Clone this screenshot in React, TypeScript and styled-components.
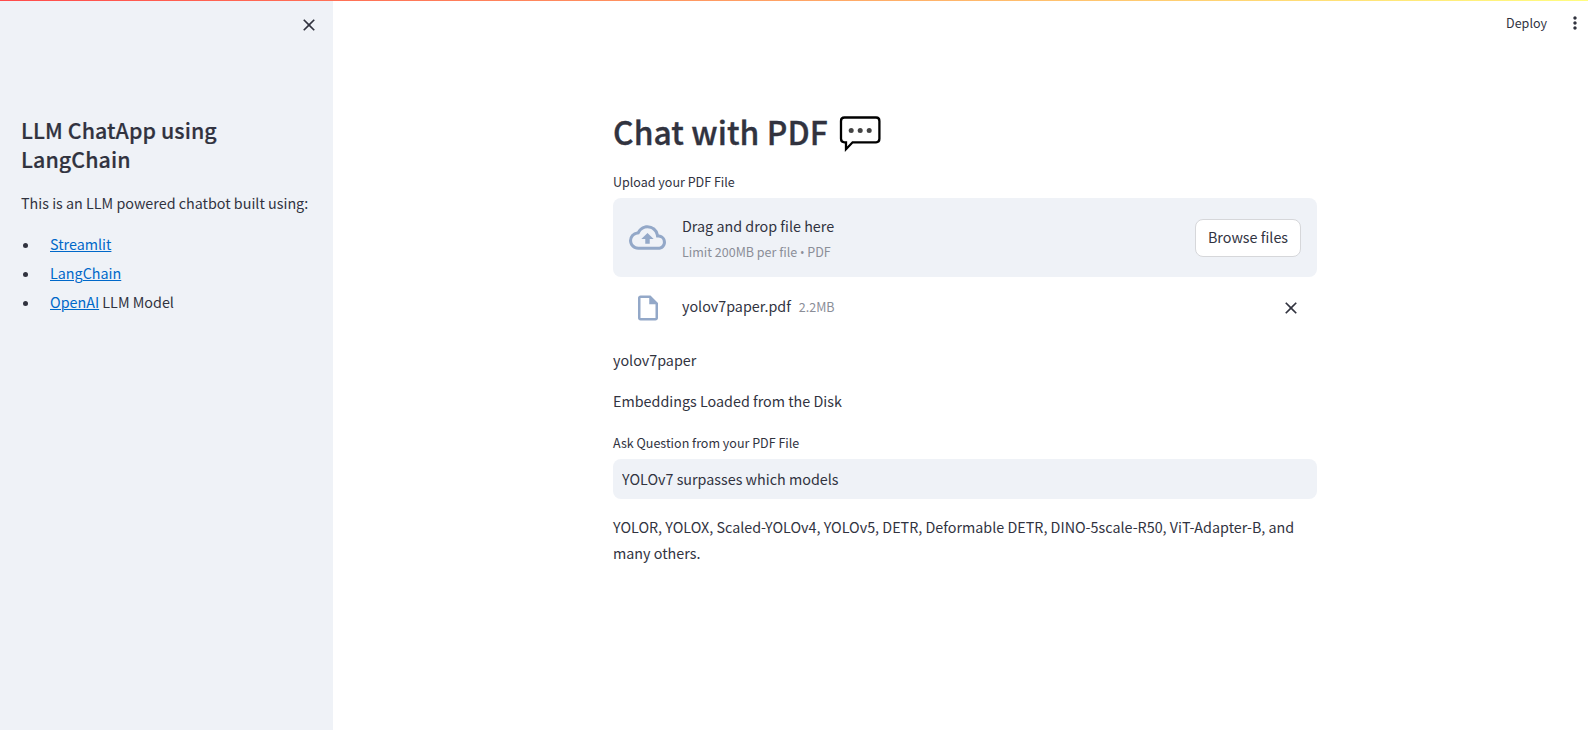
import React from 'react';
import styled, { createGlobalStyle } from 'styled-components';
import { MdClose, MdMoreVert, MdOutlineCloudUpload, MdOutlineInsertDriveFile } from 'react-icons/md';

const ink = '#31333f';
const panel = '#eff2f7';

const GlobalStyle = createGlobalStyle`
  *, *::before, *::after { box-sizing: border-box; }
  body {
    margin: 0;
    background: #fff;
    color: ${ink};
    font-family: "Noto Sans CJK SC", sans-serif;
    font-size: 14.33px;
    line-height: 25.6px;
    overflow: hidden;
  }
`;

const Page = styled.div`
  display: flex;
  flex-direction: column;
  height: 730px;
`;

const Decoration = styled.div`
  flex: none;
  height: 1px;
  background: linear-gradient(90deg, #ff4b4b, #fffd80);
`;

const Body = styled.div`
  display: flex;
  flex: 1;
`;

const Sidebar = styled.aside`
  width: 333px;
  padding: 14px 14px 0 21px;
  background: ${panel};
`;

const SidebarTop = styled.div`
  display: flex;
  justify-content: flex-end;
  height: 100px;
`;

const IconButton = styled.button`
  display: flex;
  width: 20px;
  height: 20px;
  padding: 0;
  border: 0;
  background: none;
  color: ${ink};
  cursor: pointer;
`;

const SidebarTitle = styled.h2`
  margin: 0;
  font-size: 21.4px;
  font-weight: 500;
  line-height: 29px;
  letter-spacing: 0.08px;
  -webkit-text-stroke: 0.2px ${ink};
`;

const Intro = styled.p`
  margin: 17px 0 14px;
  white-space: nowrap;
`;

const LinkList = styled.ul`
  margin: 0;
  padding: 0;
  list-style: none;
`;

const LinkItem = styled.li`
  display: flex;
  align-items: center;
  height: 29px;
  white-space: pre;

  &::before {
    content: '';
    width: 5px;
    height: 5px;
    margin: 2px 22px 0 2px;
    border-radius: 50%;
    background: ${ink};
  }
`;

const Link = styled.a`
  color: #0068c9;
  text-decoration: underline;
  text-underline-offset: 1px;
  text-decoration-thickness: 1px;
`;

const Main = styled.main`
  flex: 1;
`;

const Toolbar = styled.header`
  display: flex;
  align-items: center;
  justify-content: flex-end;
  gap: 18px;
  height: 44px;
  padding-right: 3px;
`;

const Deploy = styled.button`
  height: 26px;
  margin-bottom: 1px;
  padding: 0;
  border: 0;
  background: none;
  color: ${ink};
  font: inherit;
  font-size: 12.53px;
`;

const Content = styled.div`
  width: 704px;
  margin: 65px 0 0 280px;
`;

const Title = styled.h1`
  display: flex;
  align-items: center;
  gap: 11px;
  margin: 0 0 18px;
  height: 43px;
  font-size: 31.8px;
  font-weight: 500;
  line-height: 43px;
  letter-spacing: 0.09px;
  -webkit-text-stroke: 0.35px ${ink};
`;

const Label = styled.label`
  display: block;
  height: 22px;
  font-size: 12.53px;
  line-height: 22px;
`;

const Dropzone = styled.section`
  display: flex;
  align-items: center;
  height: 79px;
  margin-top: 5px;
  padding: 0 16px;
  border-radius: 8px;
  background: ${panel};
`;

const IconSlot = styled.span`
  display: flex;
  justify-content: center;
  width: 37px;
  margin-right: 16px;
  color: #93a8c8;
`;

const DropText = styled.div`
  display: flex;
  flex: 1;
  flex-direction: column;
  padding-top: 3px;
`;

const Hint = styled.small`
  color: #8b8e98;
  font-size: 12.53px;
`;

const Dot = styled.span`
  font-family: "Open Sans", sans-serif;
  font-size: 12px;
`;

const BrowseButton = styled.button`
  width: 106px;
  height: 38px;
  padding: 0 0 2px;
  border: 1px solid #d6d7da;
  border-radius: 8px;
  background: #fff;
  color: ${ink};
  font: inherit;
`;

const FileRow = styled.div`
  display: flex;
  align-items: center;
  height: 32px;
  margin-top: 15px;
  padding: 0 16px;
`;

const FileName = styled.div`
  display: flex;
  flex: 1;
  align-items: baseline;
  gap: 8px;
  padding-bottom: 4px;
`;

const Output = styled.p<{ $top: number }>`
  margin: ${p => p.$top}px 0 0;
  line-height: 26px;
`;

const Question = styled.div`
  display: flex;
  align-items: center;
  height: 40px;
  margin-top: 5px;
  padding: 0 9px;
  border-radius: 8px;
  background: ${panel};
`;

const QuestionInput = styled.input`
  width: 100%;
  padding: 0;
  border: 0;
  outline: 0;
  background: transparent;
  color: ${ink};
  font: inherit;
`;

const FieldLabel = styled(Label)`
  margin-top: 18px;
`;

const BubbleIcon = styled.svg`
  flex: none;
  margin-top: 7px;
`;

const SpeechBubble = () => (
  <BubbleIcon width="42" height="38" viewBox="0 0 42 38" fill="none">
    <path d="M5.5 1.5H37.1Q40.4 1.5 40.4 5V22.8Q40.4 26.3 37.1 26.3H13.6L7 33.2V26.3H5.5Q2 26.3 2 22.8V5Q2 1.5 5.5 1.5Z" stroke="#000" strokeWidth="2.3" />
    <circle cx="12.2" cy="14.4" r="2.5" fill="#444" />
    <circle cx="21.2" cy="14.4" r="2.5" fill="#444" />
    <circle cx="30.2" cy="14.4" r="2.5" fill="#444" />
  </BubbleIcon>
);

export default function App() {
  return (
    <Page>
      <GlobalStyle />
      <Decoration />
      <Body>
        <Sidebar>
          <SidebarTop>
            <IconButton aria-label="Close sidebar"><MdClose size={20} /></IconButton>
          </SidebarTop>
          <SidebarTitle>LLM ChatApp using LangChain</SidebarTitle>
          <Intro>This is an LLM powered chatbot built using:</Intro>
          <LinkList>
            <LinkItem><Link>Streamlit</Link></LinkItem>
            <LinkItem><Link>LangChain</Link></LinkItem>
            <LinkItem><Link>OpenAI</Link> LLM Model</LinkItem>
          </LinkList>
        </Sidebar>
        <Main>
          <Toolbar>
            <Deploy>Deploy</Deploy>
            <IconButton aria-label="Menu"><MdMoreVert size={20} /></IconButton>
          </Toolbar>
          <Content>
            <Title>Chat with PDF <SpeechBubble /></Title>
            <Label>Upload your PDF File</Label>
            <Dropzone>
              <IconSlot><MdOutlineCloudUpload size={37} /></IconSlot>
              <DropText>
                <span>Drag and drop file here</span>
                <Hint>Limit 200MB per file <Dot>•</Dot> PDF</Hint>
              </DropText>
              <BrowseButton>Browse files</BrowseButton>
            </Dropzone>
            <FileRow>
              <IconSlot><MdOutlineInsertDriveFile size={30} /></IconSlot>
              <FileName>yolov7paper.pdf <Hint>2.2MB</Hint></FileName>
              <IconButton aria-label="Remove file"><MdClose size={20} /></IconButton>
            </FileRow>
            <Output $top={23}>yolov7paper</Output>
            <Output $top={15}>Embeddings Loaded from the Disk</Output>
            <FieldLabel htmlFor="question">Ask Question from your PDF File</FieldLabel>
            <Question><QuestionInput id="question" defaultValue="YOLOv7 surpasses which models" /></Question>
            <Output $top={15}>
              YOLOR, YOLOX, Scaled-YOLOv4, YOLOv5, DETR, Deformable DETR, DINO-5scale-R50, ViT-Adapter-B, and many others.
            </Output>
          </Content>
        </Main>
      </Body>
    </Page>
  );
}
